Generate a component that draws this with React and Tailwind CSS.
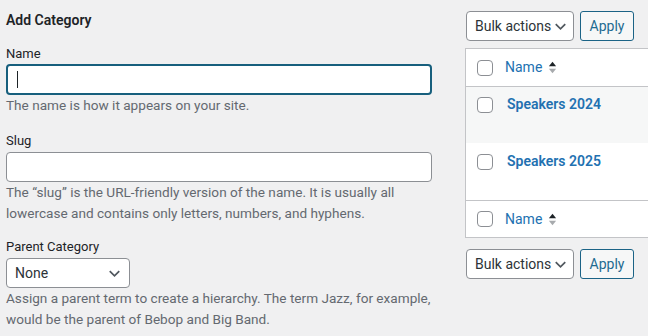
import React from 'react';

const font = { fontFamily: 'Roboto, "Noto Sans", Arial, sans-serif' };

const Chevron = ({ className }) => (
  <svg viewBox="0 0 20 20" className={className} fill="none" stroke="currentColor" strokeWidth="1.8">
    <path d="M5 7.5l5 5 5-5" />
  </svg>
);

const SortIcon = () => (
  <svg viewBox="0 0 10 16" className="w-[9px] h-[15px] ml-[6px]">
    <path d="M5 1.5l4 5H1z" fill="#1d2327" />
    <path d="M5 14.5l4-5H1z" fill="#a7aaad" />
  </svg>
);

const Checkbox = () => (
  <span className="block w-4 h-4 rounded-[4px] border border-[#8c8f94] bg-white shrink-0" />
);

const BulkBar = () => (
  <div className="flex items-center gap-[6px] pl-px">
    <div className="flex items-center justify-between w-[108px] h-[30px] rounded-[4px] border border-[#8c8f94] bg-white pl-2 pr-[5px] text-[#2c3338]">
      <span className="text-[14px] whitespace-nowrap">Bulk actions</span>
      <Chevron className="w-[19px] h-[19px] text-[#50575e] shrink-0" />
    </div>
    <button className="h-[30px] w-[54px] rounded-[3px] border border-[#1b6386] bg-[#f6f7f7] text-[#1e6b91] text-[14px]">
      Apply
    </button>
  </div>
);

const Label = ({ children, className = '' }) => (
  <div className={`text-[13px] leading-[18px] text-[#1d2327] ${className}`}>{children}</div>
);

const Help = ({ children }) => (
  <p className="text-[13.6px] leading-[21px] text-[#646970] whitespace-nowrap">{children}</p>
);

export default function App() {
  return (
    <div className="w-[648px] h-[336px] overflow-hidden bg-[#f0f0f1] flex" style={font}>
      {/* Add form */}
      <div className="w-[465px] shrink-0 pl-[6px] pr-[33px]">
        <h2 className="pt-[10px] text-[14px] leading-[20px] font-semibold text-[#1d2327]">Add Category</h2>

        <Label className="mt-[15px]">Name</Label>
        <div className="mt-px h-[31px] rounded-[4px] border-2 border-[#175f7d] bg-white flex items-center pl-[9px]">
          <span className="block w-px h-[17px] bg-[#1d2327]" />
        </div>
        <Help>The name is how it appears on your site.</Help>

        <Label className="mt-[16px]">Slug</Label>
        <div className="mt-[2px] h-[30px] rounded-[4px] border border-[#8c8f94] bg-white" />
        <Help>
          The “slug” is the URL-friendly version of the name. It is usually all
          <br />
          lowercase and contains only letters, numbers, and hyphens.
        </Help>

        <Label className="mt-[14px]">Parent Category</Label>
        <div className="mt-[2px] w-[124px] h-[30px] rounded-[4px] border border-[#8c8f94] bg-white flex items-center justify-between pl-[8px] pr-[5px] text-[#2c3338]">
          <span className="text-[14px]">None</span>
          <Chevron className="w-[19px] h-[19px] text-[#50575e]" />
        </div>
        <Help>
          Assign a parent term to create a hierarchy. The term Jazz, for example,
          <br />
          would be the parent of Bebop and Big Band.
        </Help>
      </div>

      {/* List table */}
      <div className="flex-1 min-w-0 pt-[11px]">
        <BulkBar />
        <div className="mt-[7px] w-[260px] border border-[#c3c4c7] bg-white">
          <div className="h-[38px] flex items-center pl-[11px] border-b border-[#c3c4c7]">
            <Checkbox />
            <span className="ml-[12px] text-[14px] text-[#2271b1]">Name</span>
            <SortIcon />
          </div>
          <div className="h-[56px] bg-[#f6f7f7] flex items-start pl-[11px] pt-[10px]">
            <Checkbox />
            <span className="ml-[14px] -mt-[3px] text-[14px] font-semibold text-[#2271b1]">Speakers 2024</span>
          </div>
          <div className="h-[57px] flex items-start pl-[11px] pt-[11px]">
            <Checkbox />
            <span className="ml-[14px] -mt-[3px] text-[14px] font-semibold text-[#2271b1]">Speakers 2025</span>
          </div>
          <div className="h-[37px] flex items-center pl-[11px] border-t border-[#c3c4c7]">
            <Checkbox />
            <span className="ml-[12px] text-[14px] text-[#2271b1]">Name</span>
            <SortIcon />
          </div>
        </div>
        <div className="mt-[11px]">
          <BulkBar />
        </div>
      </div>
    </div>
  );
}
